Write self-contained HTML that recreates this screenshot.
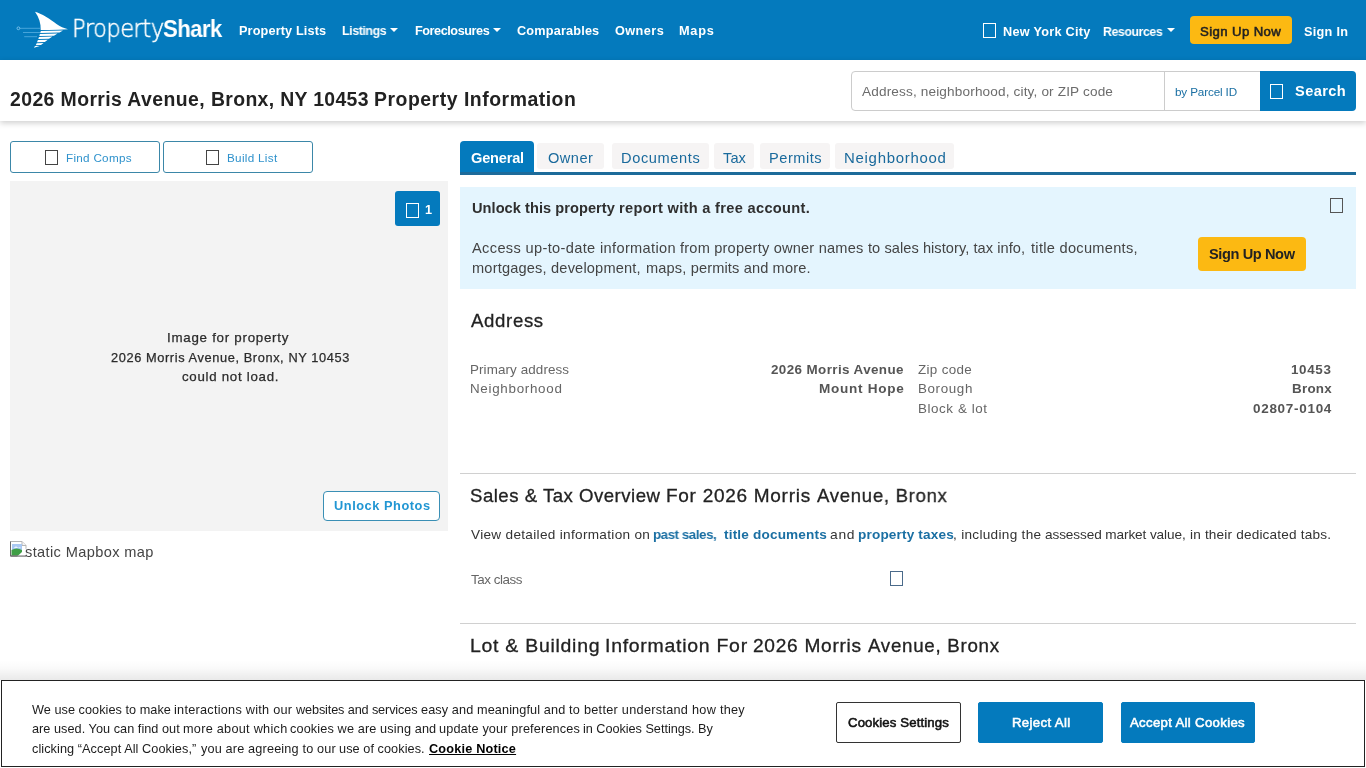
<!DOCTYPE html>
<html lang="en">
<head>
<meta charset="utf-8">
<title>2026 Morris Avenue, Bronx, NY 10453 Property Information | PropertyShark</title>
<style>
*{box-sizing:border-box;margin:0;padding:0}
html,body{width:1366px;height:768px;overflow:hidden;background:#fff}
body{position:relative;font-family:"Liberation Sans",Arial,sans-serif;font-size:15px;color:#333;line-height:20px}
a{color:inherit;text-decoration:none}
ul{list-style:none}
button,input{font-family:inherit}
.t{position:absolute;white-space:nowrap;line-height:20px;display:block;transform-origin:0 50%;will-change:transform}
.b{font-weight:bold}
.tofu{position:absolute;display:block;border:1px solid #fff}

/* ---------- top navigation ---------- */
#topnav{position:absolute;left:0;top:0;width:1366px;height:60px;background:#047abd;color:#fff}
#topnav .t{font-size:12.7px;font-weight:bold;color:#fff}
#logo-fin{position:absolute;left:14px;top:8px;width:58px;height:44px}
#logoP{font-family:"DejaVu Sans","Liberation Sans",sans-serif;font-weight:200!important;font-size:24px!important;-webkit-text-stroke:.5px #fff}
#logoS{font-size:24px!important}
.caret{position:absolute;top:28px;width:0;height:0;border-left:4px solid transparent;border-right:4px solid transparent;border-top:4px solid #fff}
#signup-top{position:absolute;left:1190px;top:16px;width:102px;height:28px;border-radius:4px;background:#fcb912}
#topnav #n9{color:#222;font-size:13.2px;font-weight:normal;-webkit-text-stroke:.55px #222}

/* ---------- title bar + search ---------- */
#titlebar{position:absolute;left:0;top:60px;width:1366px;height:61px;background:#fff;box-shadow:0 2px 6px rgba(0,0,0,.2)}
#h1{font-size:19.4px;font-weight:bold;color:#222}
#h1 .t{font:inherit;color:inherit}
#search{position:absolute;left:851px;top:11px;width:505px;height:40px}
#qwrap{position:absolute;left:0;top:0;width:314px;height:40px;border:1px solid #ccc;border-radius:4px 0 0 4px;background:#fff}
#q{position:absolute;transform-origin:0 50%;will-change:transform;left:10px;top:9px;width:290px;height:20px;line-height:20px;border:0;background:transparent;font-size:13.6px;color:#666;padding:0;outline:none}
#q::placeholder{color:#6c6c6c;opacity:1}
#parcel-cell{position:absolute;left:313px;top:0;width:97px;height:40px;border:1px solid #ccc;border-right:0;background:#fff}
#parcel{font-size:11.7px;color:#1a6fa3}
#search-btn{position:absolute;left:409px;top:0;width:96px;height:40px;border:0;border-radius:0 4px 4px 0;background:#047abd}
#search-lbl{font-size:14.6px;font-weight:bold;color:#fff}

/* ---------- left column ---------- */
.obtn{position:absolute;top:141px;height:32px;border:1px solid #3b87a8;border-radius:3px;background:#fff}
#fc,#bl{font-size:11.7px;color:#2f92cc}
#photo{position:absolute;left:10px;top:181px;width:438px;height:350px;background:#f3f3f3}
#badge{position:absolute;left:385px;top:10px;width:45px;height:35px;border-radius:3px;background:#047abd}
#cnt{font-size:12.7px;font-weight:bold;color:#fff}
#im1,#im2,#im3{font-size:12.8px;color:#2b2b2b;-webkit-text-stroke:.25px #2b2b2b}
#unlock{position:absolute;left:313px;top:310px;width:117px;height:30px;border:1px solid #3a8fb5;border-radius:4px;background:#fff}
#up{font-size:12.8px;font-weight:bold;color:#2196d3}
#mapimg{position:absolute;left:10px;top:540px;width:17px;height:17px}
#alt{font-size:14.6px;color:#444}

/* ---------- tabs ---------- */
#tabs{position:absolute;left:460px;top:141px;width:896px;height:34px;border-bottom:3px solid #1d6b9a}
#tabs li{position:absolute;top:2px;height:26px;background:#f6f4f4;border-radius:3px}
#tabs li.on{top:0;height:31px;background:#047abd;border-radius:4px 4px 0 0}
#tabs .t{font-size:14.6px;color:#1a6a9c}
#tabs .on .t{color:#fff;font-weight:bold}

/* ---------- notice ---------- */
#notice{position:absolute;left:460px;top:187px;width:896px;height:102px;background:#e4f5fe}
#nh .t{font-size:14.6px;font-weight:bold;color:#2f2f2f}
#np1 .t,#np2 .t{font-size:14.6px;color:#444}
#signup-box{position:absolute;left:738px;top:50px;width:108px;height:34px;border-radius:4px;background:#fcb912}
#nb{font-size:14.6px;font-weight:bold;color:#222}

/* ---------- report sections ---------- */
.h2,.h2 .t{font-size:18.6px;font-weight:normal;color:#222;-webkit-text-stroke:.3px #222}
.lbl{font-size:13.4px;color:#666}
.val{font-size:13.4px;font-weight:bold;color:#555}
.rule{position:absolute;left:460px;width:896px;height:1px;background:#d0d0d0}
#sp .t{font-size:13.6px;color:#333}
#sp a.t{font-weight:bold;color:#1a6fa3}

/* ---------- cookie banner ---------- */
#cookie-shadow{position:absolute;left:0;top:660px;width:1366px;height:20px;background:linear-gradient(to bottom,rgba(0,0,0,0),rgba(0,0,0,.02) 40%,rgba(0,0,0,.085))}
#cookie{position:absolute;left:1px;top:680px;width:1364px;height:87px;border:1px solid #222;background:#fff}
#cookie .t{font-size:12.7px;color:#1c1c1c}
.cbtn{position:absolute;top:21px;height:41px;border-radius:2px;background:#047abd;border:1px solid #047abd}
#cookie .cbtn .t{font-size:13.2px;font-weight:normal;color:#fff;-webkit-text-stroke:.55px #fff}
#cb-set{background:#fff;border-color:#333}
#cookie #cb1{color:#111;-webkit-text-stroke-color:#111}
#cn{font-weight:bold;text-decoration:underline;color:#000!important}
</style>
<style>
#logoP{left:72px;top:19px;letter-spacing:-0.60px;transform:scaleX(0.946)}
#logoS{left:163px;top:19px;letter-spacing:-0.60px;transform:scaleX(0.920)}
#n1{left:239px;top:21px;letter-spacing:0.14px}
#n2{left:342px;top:21px;letter-spacing:-0.45px;transform:scaleX(0.980)}
#n3{left:415px;top:21px;letter-spacing:-0.45px}
#n4{left:517px;top:21px;letter-spacing:0.18px}
#n5{left:615px;top:21px;letter-spacing:0.43px}
#n6{left:679px;top:21px;letter-spacing:0.70px;transform:scaleX(1.006)}
#n7{left:1003px;top:22px;letter-spacing:0.27px}
#n8{left:1103px;top:22px;letter-spacing:-0.45px;transform:scaleX(0.974)}
#n9{left:1200px;top:22px;letter-spacing:0.39px}
#n10{left:1304px;top:22px;letter-spacing:0.29px}
#h1a{left:10px;top:29px;letter-spacing:0.41px}
#h1b{left:211px;top:29px;letter-spacing:0.34px}
#h1c{left:374px;top:29px;letter-spacing:0.53px}
#q{left:10px;top:10px;letter-spacing:0.15px}
#parcel{left:10px;top:10px;letter-spacing:-0.14px}
#search-lbl{left:35px;top:10px;letter-spacing:0.41px}
#fc{left:55px;top:6px;letter-spacing:0.28px}
#bl{left:63px;top:6px;letter-spacing:0.30px}
#cnt{left:30px;top:9px}
#im1{left:157px;top:147px;letter-spacing:0.70px;transform:scaleX(1.042)}
#im2{left:101px;top:167px;letter-spacing:0.60px}
#im3{left:172px;top:186px;letter-spacing:0.70px;transform:scaleX(1.037)}
#up{left:10px;top:4px;letter-spacing:0.54px}
#alt{left:25px;top:542px;letter-spacing:0.37px}
#tb1{left:11px;top:7px;letter-spacing:-0.21px}
#tb2{left:11px;top:5px;letter-spacing:0.48px}
#tb3{left:9px;top:5px;letter-spacing:0.61px}
#tb4{left:9px;top:5px;letter-spacing:0.10px}
#tb5{left:9px;top:5px;letter-spacing:0.52px}
#tb6{left:9px;top:5px;letter-spacing:0.70px;transform:scaleX(1.025)}
#nha{left:12px;top:11px;letter-spacing:0.05px}
#nhb{left:159px;top:11px;letter-spacing:0.32px}
#np1a{left:12px;top:51px;letter-spacing:0.35px}
#np1b{left:220px;top:51px;letter-spacing:0.20px}
#np1c{left:408px;top:51px;letter-spacing:0.06px}
#np1d{left:571px;top:51px;letter-spacing:0.29px}
#np2a{left:12px;top:71px;letter-spacing:0.18px}
#np2b{left:186px;top:71px;letter-spacing:0.14px}
#nb{left:11px;top:7px;letter-spacing:-0.40px}
#ah{left:471px;top:311px;letter-spacing:0.66px}
#a1{left:470px;top:360px;letter-spacing:0.11px}
#a2{left:470px;top:379px;letter-spacing:0.70px}
#v1{left:771px;top:360px;letter-spacing:0.41px}
#v2{left:819px;top:379px;letter-spacing:0.70px;transform:scaleX(1.013)}
#a3{left:918px;top:360px;letter-spacing:0.35px}
#a4{left:918px;top:379px;letter-spacing:0.62px}
#a5{left:918px;top:399px;letter-spacing:0.57px}
#v3{left:1291px;top:360px;letter-spacing:0.66px}
#v4{left:1292px;top:379px;letter-spacing:0.27px}
#v5{left:1253px;top:399px;letter-spacing:0.70px;transform:scaleX(1.007)}
#sha{left:470px;top:486px;letter-spacing:0.50px}
#shb{left:666px;top:486px;letter-spacing:0.70px;transform:scaleX(1.022)}
#shc{left:817px;top:486px;letter-spacing:0.70px;transform:scaleX(0.998)}
#s1{left:471px;top:525px;letter-spacing:0.31px}
#s2{left:653px;top:525px;letter-spacing:-0.45px;transform:scaleX(0.979)}
#s3{left:724px;top:525px;letter-spacing:0.17px}
#s4{left:830px;top:525px;letter-spacing:0.70px;transform:scaleX(1.020)}
#s5{left:858px;top:525px;letter-spacing:0.16px}
#s6a{left:953px;top:525px;letter-spacing:0.30px}
#s6b{left:1045px;top:525px;letter-spacing:-0.10px}
#s6c{left:1190px;top:525px;letter-spacing:0.18px}
#tc{left:471px;top:570px;letter-spacing:-0.45px;transform:scaleX(0.991)}
#lha{left:470px;top:636px;letter-spacing:0.70px;transform:scaleX(1.046)}
#lhb{left:605px;top:636px;letter-spacing:0.70px;transform:scaleX(1.046)}
#lhc{left:753px;top:636px;letter-spacing:0.70px;transform:scaleX(1.028)}
#lhd{left:868px;top:636px;letter-spacing:0.70px;transform:scaleX(1.008)}
#c1a{left:30px;top:19px;letter-spacing:0.04px}
#c1b{left:172px;top:19px;letter-spacing:0.26px}
#c1c{left:294px;top:19px;letter-spacing:-0.13px}
#c1d{left:419px;top:19px;letter-spacing:0.11px}
#c1e{left:567px;top:19px;letter-spacing:0.28px}
#c2a{left:30px;top:38px;letter-spacing:0.04px}
#c2b{left:181px;top:38px;letter-spacing:0.27px}
#c2c{left:288px;top:38px;letter-spacing:0.13px}
#c2d{left:437px;top:38px;letter-spacing:0.15px}
#c2e{left:581px;top:38px;letter-spacing:-0.03px}
#c3a{left:30px;top:58px;letter-spacing:0.07px}
#c3b{left:199px;top:58px;letter-spacing:0.16px}
#c3c{left:337px;top:58px;letter-spacing:0.07px}
#cn{left:427px;top:58px;letter-spacing:0.19px}
#cb1{left:11px;top:10px;letter-spacing:0.12px}
#cb2{left:33px;top:10px;letter-spacing:0.35px}
#cb3{left:8px;top:10px;letter-spacing:0.32px}
</style>
</head>
<body>

<header id="topnav">
  <a href="#" id="logo" aria-label="PropertyShark">
    <svg id="logo-fin" viewBox="14 8 58 44">
      <path d="M19.8 28.300H40M23 32.500H41M24.200 36.700H37" stroke="#7cc6f0" stroke-width=".7" fill="none" opacity=".8"/>
      <circle cx="18.400" cy="28.300" r="1.400" fill="none" stroke="#9ad4f6" stroke-width=".7"/>
      <path d="M35 11.700C41 13.200 51 19.500 56.500 24 60 26.600 64 28.300 68 29.200 59 30 50 30.100 40.700 29.900 41 23.500 39 17 35 11.700Z" fill="#fff"/>
      <path d="M40.800 31 63 30.400 59.500 32.500 40.300 33ZM39.900 34 57.500 33.500 54 35.700 39.300 36ZM39 37 52.500 36.600 49 38.800 38.300 39.100ZM37.900 40.100 47.800 39.800 44.800 42 37 42.200ZM36.700 43.200 43.600 43 41 45 35.700 45.200ZM35.400 46 39.700 45.900 34 47.800 34.600 46.600Z" fill="#fff"/>
    </svg>
    <span class="t" id="logoP">Property</span><span class="t b" id="logoS">Shark</span>
  </a>
  <nav>
    <a href="#" class="t" id="n1">Property Lists</a>
    <a href="#" class="t" id="n2">Listings</a><i class="caret" style="left:390px"></i>
    <a href="#" class="t" id="n3">Foreclosures</a><i class="caret" style="left:493px"></i>
    <a href="#" class="t" id="n4">Comparables</a>
    <a href="#" class="t" id="n5">Owners</a>
    <a href="#" class="t" id="n6">Maps</a>
  </nav>
  <nav>
    <i class="tofu" style="left:983px;top:23px;width:13px;height:15px"></i>
    <a href="#" class="t" id="n7">New York City</a>
    <a href="#" class="t" id="n8">Resources</a><i class="caret" style="left:1167px"></i>
    <a href="#" id="signup-top"></a><a href="#" class="t" id="n9">Sign Up Now</a>
    <a href="#" class="t" id="n10">Sign In</a>
  </nav>
</header>

<section id="titlebar">
  <h1 id="h1"><span class="t" id="h1a">2026 Morris Avenue,</span> <span class="t" id="h1b">Bronx, NY 10453</span> <span class="t" id="h1c">Property Information</span></h1>
  <form id="search" onsubmit="return false">
    <div id="qwrap"><input id="q" type="text" placeholder="Address, neighborhood, city, or ZIP code"></div>
    <div id="parcel-cell"><a href="#" class="t" id="parcel">by Parcel ID</a></div>
    <button id="search-btn" type="button"><i class="tofu" style="left:10px;top:13px;width:13px;height:15px"></i><span class="t" id="search-lbl">Search</span></button>
  </form>
</section>

<main>
<aside id="left">
  <a href="#" class="obtn" style="left:10px;width:150px"><i class="tofu" style="left:34px;top:8px;width:13px;height:15px;border-color:#444"></i><span class="t" id="fc">Find Comps</span></a>
  <a href="#" class="obtn" style="left:163px;width:150px"><i class="tofu" style="left:42px;top:8px;width:13px;height:15px;border-color:#444"></i><span class="t" id="bl">Build List</span></a>
  <figure id="photo">
    <a href="#" id="badge"><i class="tofu" style="left:11px;top:12px;width:13px;height:15px"></i><span class="t" id="cnt">1</span></a>
    <figcaption>
      <span class="t" id="im1">Image for property</span>
      <span class="t" id="im2">2026 Morris Avenue, Bronx, NY 10453</span>
      <span class="t" id="im3">could not load.</span>
    </figcaption>
    <a href="#" id="unlock"><span class="t" id="up">Unlock Photos</span></a>
  </figure>
  <svg id="mapimg" viewBox="0 0 17 17">
    <path d="M.5 1.500h11.500l4 4v10.500H.5z" fill="#fff" stroke="#b5b5b5"/>
    <path d="M.5 1.500v14.500h15.500" fill="none" stroke="#6a6a6a"/>
    <path d="M12 1.500v4h4" fill="#f4f4f4" stroke="#b5b5b5"/>
    <path d="M2 4h10v6H2z" fill="#a9c8f2"/>
    <path d="M4 8c1-2 3-2 4 0 1-1 2-1 3 0z" fill="#e9f1fc"/>
    <path d="M1.500 15.500v-5.500c3.500-2 7-2 10.500 0v5.500z" fill="#3f9e45"/>
    <path d="M7 16.500 16.500 8v8.500z" fill="#fff"/>
    <path d="M.5 16h15.500" fill="none" stroke="#6a6a6a"/>
  </svg>
  <span class="t" id="alt">static Mapbox map</span>
</aside>
<article id="report">
  <ul id="tabs">
    <li class="on" style="left:0;width:74px"><a href="#" class="t" id="tb1">General</a></li>
    <li style="left:77px;width:67px"><a href="#" class="t" id="tb2">Owner</a></li>
    <li style="left:152px;width:97px"><a href="#" class="t" id="tb3">Documents</a></li>
    <li style="left:254px;width:40px"><a href="#" class="t" id="tb4">Tax</a></li>
    <li style="left:300px;width:70px"><a href="#" class="t" id="tb5">Permits</a></li>
    <li style="left:375px;width:119px"><a href="#" class="t" id="tb6">Neighborhood</a></li>
  </ul>

  <div id="notice">
    <i class="tofu" style="left:870px;top:11px;width:13px;height:15px;border-color:#555"></i>
    <strong id="nh"><span class="t" id="nha">Unlock this property</span> <span class="t" id="nhb">report with a free account.</span></strong>
    <p>
      <span id="np1"><span class="t" id="np1a">Access up-to-date information</span> <span class="t" id="np1b">from property owner names</span> <span class="t" id="np1c">to sales history, tax info,</span> <span class="t" id="np1d">title documents,</span></span>
      <span id="np2"><span class="t" id="np2a">mortgages, development,</span> <span class="t" id="np2b">maps, permits and more.</span></span>
    </p>
    <a href="#" id="signup-box"><span class="t" id="nb">Sign Up Now</span></a>
  </div>

  <section id="address">
    <h2 class="t h2" id="ah">Address</h2>
    <dl>
      <dt class="t lbl" id="a1">Primary address</dt><dd class="t val" id="v1">2026 Morris Avenue</dd>
      <dt class="t lbl" id="a2">Neighborhood</dt><dd class="t val" id="v2">Mount Hope</dd>
      <dt class="t lbl" id="a3">Zip code</dt><dd class="t val" id="v3">10453</dd>
      <dt class="t lbl" id="a4">Borough</dt><dd class="t val" id="v4">Bronx</dd>
      <dt class="t lbl" id="a5">Block &amp; lot</dt><dd class="t val" id="v5">02807-0104</dd>
    </dl>
  </section>

  <hr class="rule" style="top:473px;border:0">
  <section id="sales">
    <h2 class="h2" id="sh"><span class="t" id="sha">Sales &amp; Tax Overview</span> <span class="t" id="shb">For 2026 Morris</span> <span class="t" id="shc">Avenue, Bronx</span></h2>
    <p id="sp">
      <span class="t" id="s1">View detailed information on</span>
      <a href="#" class="t" id="s2">past sales,</a>
      <a href="#" class="t" id="s3">title documents</a>
      <span class="t" id="s4">and</span>
      <a href="#" class="t" id="s5">property taxes</a><span id="s6"><span class="t" id="s6a">, including the</span> <span class="t" id="s6b">assessed market value,</span> <span class="t" id="s6c">in their dedicated tabs.</span></span>
    </p>
    <span class="t lbl" id="tc">Tax class</span>
    <i class="tofu" style="left:890px;top:571px;width:13px;height:15px;border-color:#4a6a8a"></i>
  </section>

  <hr class="rule" style="top:623px;border:0">
  <section id="lot">
    <h2 class="h2" id="lh"><span class="t" id="lha">Lot &amp; Building</span> <span class="t" id="lhb">Information For</span> <span class="t" id="lhc">2026 Morris</span> <span class="t" id="lhd">Avenue, Bronx</span></h2>
  </section>
</article>
</main>

<div id="cookie-shadow"></div>
<div id="cookie" role="dialog" aria-label="Cookie banner">
  <p>
    <span id="c1"><span class="t" id="c1a">We use cookies to make</span> <span class="t" id="c1b">interactions with our</span> <span class="t" id="c1c">websites and services</span> <span class="t" id="c1d">easy and meaningful and</span> <span class="t" id="c1e">to better understand how they</span></span>
    <span id="c2"><span class="t" id="c2a">are used. You can find out</span> <span class="t" id="c2b">more about which</span> <span class="t" id="c2c">cookies we are using and</span> <span class="t" id="c2d">update your preferences</span> <span class="t" id="c2e">in Cookies Settings. By</span></span>
    <span id="c3"><span class="t" id="c3a">clicking “Accept All Cookies,”</span> <span class="t" id="c3b">you are agreeing to our</span> <span class="t" id="c3c">use of cookies.</span></span>
    <a href="#" class="t" id="cn">Cookie Notice</a>
  </p>
  <button class="cbtn" id="cb-set" type="button" style="left:834px;width:125px"><span class="t" id="cb1">Cookies Settings</span></button>
  <button class="cbtn" type="button" style="left:976px;width:125px"><span class="t" id="cb2">Reject All</span></button>
  <button class="cbtn" type="button" style="left:1119px;width:134px"><span class="t" id="cb3">Accept All Cookies</span></button>
</div>
</body>
</html>
